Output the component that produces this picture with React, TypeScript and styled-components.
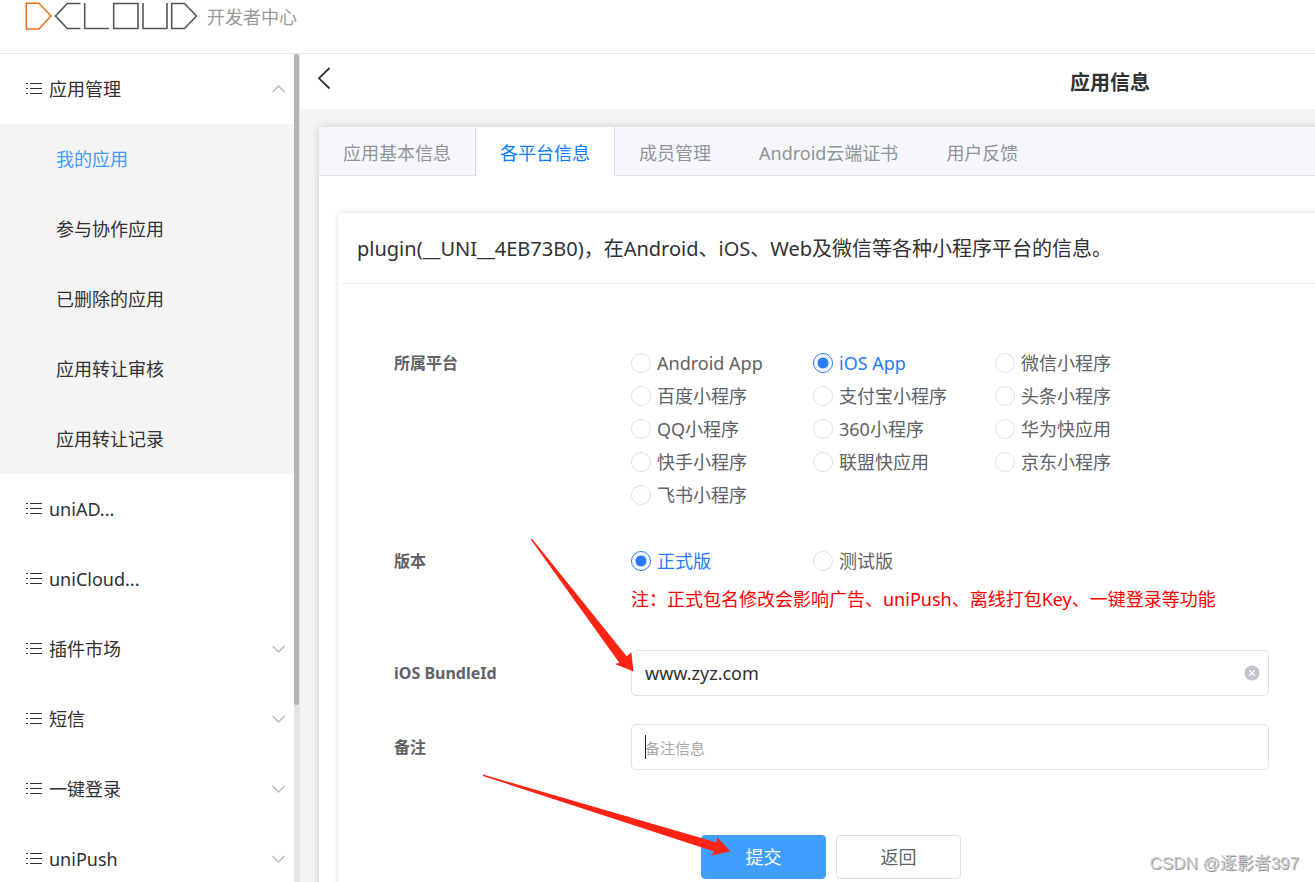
import React from 'react';
import styled, { createGlobalStyle } from 'styled-components';

const GlobalStyle = createGlobalStyle`
  * { box-sizing: border-box; }
  body {
    margin: 0;
    background: #fff;
    color: #303133;
    font-family: "Noto Sans", "Noto Sans CJK SC", sans-serif;
    font-size: 18px;
    line-height: 24px;
  }
  button, input { font: inherit; color: inherit; }
  a { color: inherit; text-decoration: none; }
  ul { list-style: none; margin: 0; padding: 0; }
  svg { display: block; flex: none; }
`;

const Page = styled.div`
  position: relative;
  height: 100vh;
  min-height: 600px;
  display: flex;
  flex-direction: column;
  overflow: hidden;
`;

const TopBar = styled.header`
  flex: none;
  height: 54px;
  padding: 1px 25px 0;
  display: flex;
  align-items: flex-start;
  gap: 9px;
  border-bottom: 1px solid #e6e6e6;
`;

const SiteName = styled.span`
  padding-top: 4px;
  color: #999;
`;

const Body = styled.div`
  flex: 1;
  min-height: 0;
  display: flex;
`;

const Sidebar = styled.aside`
  flex: none;
  width: 300px;
  display: flex;
  overflow: hidden;
`;

const Menu = styled.nav`
  flex: 1;
`;

const MenuLink = styled.a`
  height: 70px;
  padding: 0 9px 0 25px;
  display: flex;
  align-items: center;
  gap: 6px;
`;

const MenuText = styled.span`
  flex: 1;
`;

const SubMenu = styled.ul`
  background: #f4f4f4;
`;

const SubLink = styled.a<{ $active?: boolean }>`
  height: 70px;
  padding-left: 56px;
  display: flex;
  align-items: center;
  color: ${(p) => (p.$active ? '#409eff' : '#303133')};
`;

const ScrollTrack = styled.div`
  width: 6px;
  background: #e4e4e4;
`;

const ScrollThumb = styled.div`
  width: 5px;
  height: 651px;
  border-radius: 3px;
  background: #b4b4b4;
`;

const Main = styled.main`
  flex: 1;
  min-width: 0;
  overflow: hidden;
  background: #f4f4f4;
`;

const Wide = styled.div`
  min-width: 1620px;
  min-height: 100%;
  display: flex;
  flex-direction: column;
`;

const TitleBar = styled.div`
  height: 55px;
  padding: 0 16px;
  display: grid;
  grid-template-columns: 1fr auto 1fr;
  align-items: center;
  background: #fff;
`;

const BackButton = styled.button`
  justify-self: start;
  padding: 0 0 8px;
  border: 0;
  background: none;
`;

const Title = styled.h1`
  margin: 0;
  padding-top: 2px;
  font-size: 20px;
  line-height: 28px;
  font-weight: 700;
`;

const Panel = styled.section`
  flex: 1;
  margin: 18px 19px 0;
  background: #fff;
  box-shadow: 0 0 8px rgba(0, 0, 0, 0.16);
`;

const Tabs = styled.div`
  height: 49px;
  display: flex;
  background: #f5f7fa;
  border-bottom: 1px solid #e0e3e9;
`;

const Tab = styled.button<{ $active?: boolean }>`
  height: 49px;
  padding: 2px 24px 0;
  border: 0 solid #dcdfe6;
  border-width: ${(p) => (p.$active ? '0 1px' : '0')};
  background: ${(p) => (p.$active ? '#fff' : 'none')};
  color: ${(p) => (p.$active ? '#0a7bff' : '#909399')};
`;

const Card = styled.div`
  margin: 37px 19px 0;
  min-height: 720px;
  border-radius: 5px;
  box-shadow: 0 0 6px rgba(0, 0, 0, 0.14);
`;

const CardHead = styled.div`
  height: 71px;
  padding: 2px 19px 0;
  display: flex;
  align-items: center;
  border-bottom: 1px solid #f2f2f2;
  font-size: 20px;
  line-height: 28px;
`;

const Form = styled.form`
  padding: 62px 56px 0;
  display: grid;
  grid-template-columns: 237px 638px;
`;

const labelText = `
  font-size: 16px;
  font-weight: 700;
  color: #606266;
`;

const RowName = styled.div`
  padding-top: 5px;
  ${labelText}
`;

const FieldLabel = styled.label`
  padding-top: 11px;
  ${labelText}
`;

const RadioGrid = styled.div`
  display: grid;
  grid-template-columns: repeat(3, 182px);
  grid-auto-rows: 33px;
`;

const PlatformGrid = styled(RadioGrid)`
  margin-bottom: 33px;
`;

const RadioLabel = styled.label`
  display: flex;
  align-items: center;
  gap: 6px;
  color: #606266;
  white-space: nowrap;
  &:has(input:checked) { color: #2979ff; }
`;

const Radio = styled.input`
  appearance: none;
  width: 20px;
  height: 20px;
  margin: 0;
  border: 1px solid #dcdfe6;
  border-radius: 50%;
  background: #fff;
  &:checked {
    border-color: #2979ff;
    background: radial-gradient(circle, #2979ff 5px, #fff 6px);
  }
`;

const Note = styled.p`
  margin: 10px 0 39px;
  color: #f00;
`;

const Field = styled.div`
  position: relative;
  height: 46px;
  margin-bottom: 28px;
`;

const TextInput = styled.input`
  width: 100%;
  height: 100%;
  padding: 0 40px 0 13px;
  border: 1px solid #e0e2e6;
  border-radius: 5px;
  outline: none;
  background: #fff;
  &::placeholder {
    font-size: 15px;
    color: #a8a8a8;
    opacity: 1;
  }
`;

const ClearButton = styled.button`
  position: absolute;
  right: 9px;
  top: 15px;
  padding: 0;
  border: 0;
  background: none;
`;

const Caret = styled.span`
  position: absolute;
  left: 14px;
  top: 11px;
  width: 1px;
  height: 24px;
  background: #222;
`;

const Actions = styled.div`
  grid-column: 1 / -1;
  padding: 37px 0 0 307px;
  display: flex;
  gap: 10px;
`;

const Button = styled.button<{ $primary?: boolean }>`
  width: 125px;
  height: 44px;
  border: 1px solid ${(p) => (p.$primary ? '#409eff' : '#dcdfe6')};
  border-radius: 4px;
  background: ${(p) => (p.$primary ? '#409eff' : '#fff')};
  color: ${(p) => (p.$primary ? '#fff' : '#606266')};
`;

const Arrows = styled.svg`
  position: absolute;
  left: 480px;
  top: 535px;
  pointer-events: none;
`;

const Watermark = styled.span`
  position: absolute;
  right: 16px;
  bottom: 6px;
  font-family: "Liberation Sans", "Noto Sans CJK SC", sans-serif;
  font-size: 17px;
  color: #d0d0d0;
  text-shadow: 1px 1px 0 #999;
`;

const Logo = () => (
  <svg width="173" height="30" viewBox="25 1 173 30" fill="none" stroke="#555" strokeWidth="1.6" role="img" aria-label="DCloud">
    <path stroke="#f0701e" d="M26.3 3.3H39L51 16 39 29H26.3Z" />
    <path d="M80.5 3.5H67.3L55.5 16l11.8 12.5H80.5M84.7 3v25.5H109M113.7 3.5h24.3v25h-24.3ZM143 3v25.5h24V3M171.7 3.5H184.5L196.5 16 184.5 28.5H171.7Z" />
  </svg>
);

const ListIcon = () => (
  <svg width="18" height="14" viewBox="0 0 18 14" fill="none" stroke="#303133" strokeWidth="1.2" aria-hidden="true">
    <path d="M5 1.5h12M5 6.5h12M5 11.5h12M1 1.5h2M1 6.5h2M1 11.5h2" />
  </svg>
);

const Chevron = ({ up }: { up?: boolean }) => (
  <svg width="13" height="8" viewBox="0 0 13 8" fill="none" stroke="#b8babd" strokeWidth="1.4" aria-hidden="true">
    <path d={up ? 'M.5 7l6-6 6 6' : 'M.5 1l6 6 6-6'} />
  </svg>
);

const subItems = ['我的应用', '参与协作应用', '已删除的应用', '应用转让审核', '应用转让记录'];

const menuItems = [
  { text: 'uniAD...', open: false },
  { text: 'uniCloud...', open: false },
  { text: '插件市场', open: true },
  { text: '短信', open: true },
  { text: '一键登录', open: true },
  { text: 'uniPush', open: true },
];

const tabs = ['应用基本信息', '各平台信息', '成员管理', 'Android云端证书', '用户反馈'];

const platforms = [
  'Android App', 'iOS App', '微信小程序',
  '百度小程序', '支付宝小程序', '头条小程序',
  'QQ小程序', '360小程序', '华为快应用',
  '快手小程序', '联盟快应用', '京东小程序',
  '飞书小程序',
];

export default function App() {
  return (
    <Page lang="zh-CN">
      <GlobalStyle />
      <TopBar>
        <Logo />
        <SiteName>开发者中心</SiteName>
      </TopBar>
      <Body>
        <Sidebar>
          <Menu>
            <MenuLink href="#apps">
              <ListIcon />
              <MenuText>应用管理</MenuText>
              <Chevron up />
            </MenuLink>
            <SubMenu>
              {subItems.map((text, i) => (
                <li key={text}>
                  <SubLink href="#app" $active={i === 0}>{text}</SubLink>
                </li>
              ))}
            </SubMenu>
            {menuItems.map((item) => (
              <MenuLink key={item.text} href="#menu">
                <ListIcon />
                <MenuText>{item.text}</MenuText>
                {item.open && <Chevron />}
              </MenuLink>
            ))}
          </Menu>
          <ScrollTrack>
            <ScrollThumb />
          </ScrollTrack>
        </Sidebar>
        <Main>
          <Wide>
            <TitleBar>
              <BackButton type="button" aria-label="返回">
                <svg width="16" height="24" viewBox="0 0 16 24" fill="none" stroke="#303133" strokeWidth="1.8">
                  <path d="M13.5 2L3 12.3 13.5 22.5" />
                </svg>
              </BackButton>
              <Title>应用信息</Title>
            </TitleBar>
            <Panel>
              <Tabs role="tablist">
                {tabs.map((text, i) => (
                  <Tab key={text} type="button" role="tab" aria-selected={i === 1} $active={i === 1}>
                    {text}
                  </Tab>
                ))}
              </Tabs>
              <Card>
                <CardHead>plugin(__UNI__4EB73B0)，在Android、iOS、Web及微信等各种小程序平台的信息。</CardHead>
                <Form>
                  <RowName id="platform">所属平台</RowName>
                  <PlatformGrid role="radiogroup" aria-labelledby="platform">
                    {platforms.map((name) => (
                      <RadioLabel key={name}>
                        <Radio type="radio" name="platform" defaultChecked={name === 'iOS App'} />
                        {name}
                      </RadioLabel>
                    ))}
                  </PlatformGrid>
                  <RowName id="version">版本</RowName>
                  <div>
                    <RadioGrid role="radiogroup" aria-labelledby="version">
                      <RadioLabel>
                        <Radio type="radio" name="version" defaultChecked />
                        正式版
                      </RadioLabel>
                      <RadioLabel>
                        <Radio type="radio" name="version" />
                        测试版
                      </RadioLabel>
                    </RadioGrid>
                    <Note>注：正式包名修改会影响广告、uniPush、离线打包Key、一键登录等功能</Note>
                  </div>
                  <FieldLabel htmlFor="bundle">iOS BundleId</FieldLabel>
                  <Field>
                    <TextInput id="bundle" type="text" defaultValue="www.zyz.com" />
                    <ClearButton type="button" aria-label="清空">
                      <svg width="16" height="16" viewBox="0 0 16 16">
                        <circle cx="8" cy="8" r="7.5" fill="#c0c4cc" />
                        <path d="M5.2 5.2l5.6 5.6M10.8 5.2l-5.6 5.6" stroke="#fff" strokeWidth="1.3" />
                      </svg>
                    </ClearButton>
                  </Field>
                  <FieldLabel htmlFor="remark">备注</FieldLabel>
                  <Field>
                    <TextInput id="remark" type="text" placeholder="备注信息" />
                    <Caret />
                  </Field>
                  <Actions>
                    <Button type="button" $primary>提交</Button>
                    <Button type="button">返回</Button>
                  </Actions>
                </Form>
              </Card>
            </Panel>
          </Wide>
        </Main>
      </Body>
      <Arrows width="256" height="325" viewBox="480 535 256 325" fill="#ff2314" aria-hidden="true">
        <path d="M530.8 539.5L532 538.8 626.7 656.3 631.3 652.3 633.5 671.5 615 664 619.3 662.7Z" />
        <path d="M483 774.6L716.7 842.5 717 837.3 730.5 851.3 711.3 855.5 714.3 851.5 483 776Z" />
      </Arrows>
      <Watermark>CSDN @逐影者397</Watermark>
    </Page>
  );
}
